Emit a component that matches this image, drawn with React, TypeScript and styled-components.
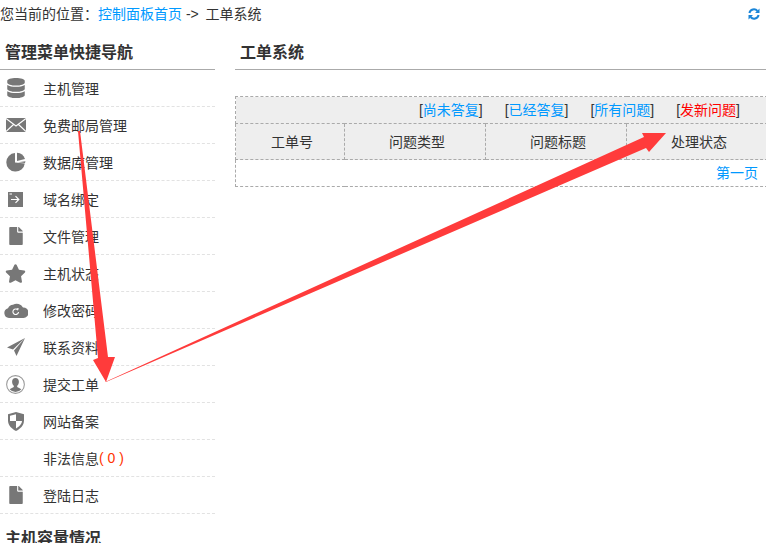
import React, { FC, ReactNode } from 'react';
import styled, { createGlobalStyle } from 'styled-components';
import { FaDatabase, FaFile, FaStar } from 'react-icons/fa';

const GlobalStyle = createGlobalStyle`
  html, body {
    margin: 0;
    padding: 0;
    height: 543px;
    overflow: hidden;
    background: #fff;
    font-family: "Liberation Sans", "Noto Sans CJK SC", sans-serif;
    font-size: 14px;
    color: #333;
  }
`;

const grey = '#777';

const MailIcon = () => (
  <svg width="20" height="14" viewBox="0 0 20 14">
    <rect width="20" height="14" fill={grey} />
    <path d="M0 .5 10 8 20 .5M0 13.5 7.5 6.5M20 13.5 12.5 6.5" fill="none" stroke="#fff" strokeWidth="1.1" />
  </svg>
);

const PieIcon = () => (
  <svg width="20" height="20" viewBox="0 0 20 20">
    <path d="M9 1A9.3 9.3 0 1 0 18.8 11.5L9 10.5Z" fill={grey} />
    <path d="M11 0.8A9 9 0 0 1 19 7L11 9Z" fill={grey} />
    <path d="M12 10.2 19.5 9.2A9 9 0 0 1 19 10.9Z" fill={grey} />
  </svg>
);

const LoginIcon = () => (
  <svg width="15" height="15" viewBox="0 0 15 15">
    <rect width="15" height="15" fill={grey} />
    <path d="M3 7.5H10M7.5 4.2 10.8 7.5 7.5 10.8M1.5 2H4" fill="none" stroke="#fff" strokeWidth="1.2" />
  </svg>
);

const CloudIcon = () => (
  <svg width="24" height="16" viewBox="0 0 24 16">
    <path d="M5 16A5 5 0 0 1 4 6.2 6 6 0 0 1 9 2.8 7 7 0 0 1 19 5.5 5.2 5.2 0 0 1 19.5 16Z" fill={grey} />
    <path d="M14.5 10A2.8 2.8 0 1 1 13.5 7.6" fill="none" stroke="#fff" strokeWidth="1.1" />
    <path d="M12.5 6 15 6.6 13.6 8.8Z" fill="#fff" />
  </svg>
);

const PlaneIcon = () => (
  <svg width="18" height="18" viewBox="0 0 18 18">
    <path d="M18 0 0 9.5 6 11.5ZM18 0 7 12.5 9.5 18Z" fill={grey} />
  </svg>
);

const UserIcon = () => (
  <svg width="19" height="19" viewBox="0 0 18 18">
    <circle cx="9" cy="9" r="8.4" fill="#fff" stroke="#999" strokeWidth="1" />
    <path d="M9 2.8C6.8 2.8 5.6 4.6 5.8 6.8 6 8.4 6.7 9.6 7.4 10.3V11.4L3.4 13.6A7.4 7.4 0 0 0 14.6 13.6L10.6 11.4V10.3C11.3 9.6 12 8.4 12.2 6.8 12.4 4.6 11.2 2.8 9 2.8Z" fill={grey} />
  </svg>
);

const ShieldIcon = () => (
  <svg width="16" height="19" viewBox="0 0 16 19">
    <path d="M8 0 16 2.2V8.5C16 13.5 12 17 8 19 4 17 0 13.5 0 8.5V2.2Z" fill={grey} />
    <path d="M8 2.2 2 3.8V9H8ZM8 9V16.4C11 14.8 13.8 12.2 14 9Z" fill="#fff" />
  </svg>
);

const RefreshIcon = () => (
  <svg width="12" height="12" viewBox="0 0 12 12">
    <path d="M1.4 5A4.6 4.6 0 0 1 9.4 3M10.6 7A4.6 4.6 0 0 1 2.6 9" fill="none" stroke="#1a85d8" strokeWidth="2" />
    <path d="M11.5 .4V5H7ZM.5 11.6V7H5Z" fill="#1a85d8" />
  </svg>
);

type MenuEntry = { icon?: ReactNode; label: string; count?: string };

const menu: MenuEntry[] = [
  { icon: <FaDatabase size={20} color={grey} />, label: '主机管理' },
  { icon: <MailIcon />, label: '免费邮局管理' },
  { icon: <PieIcon />, label: '数据库管理' },
  { icon: <LoginIcon />, label: '域名绑定' },
  { icon: <FaFile size={18} color={grey} />, label: '文件管理' },
  { icon: <FaStar size={21} color={grey} />, label: '主机状态' },
  { icon: <CloudIcon />, label: '修改密码' },
  { icon: <PlaneIcon />, label: '联系资料' },
  { icon: <UserIcon />, label: '提交工单' },
  { icon: <ShieldIcon />, label: '网站备案' },
  { label: '非法信息', count: '( 0 )' },
  { icon: <FaFile size={18} color={grey} />, label: '登陆日志' },
];

const filters = [
  { label: '尚未答复' },
  { label: '已经答复' },
  { label: '所有问题' },
  { label: '发新问题', alert: true },
];

const columns = ['工单号', '问题类型', '问题标题', '处理状态'];

const App: FC = () => (
  <>
    <GlobalStyle />
    <Page>
      <TopBar>
        <div>
          您当前的位置：<Link>控制面板首页</Link> <Crumb>-&gt;</Crumb> 工单系统
        </div>
        <RefreshIcon />
      </TopBar>
      <Columns>
        <Sidebar>
          <Heading>管理菜单快捷导航</Heading>
          {menu.map(item => (
            <MenuRow key={item.label}>
              <IconSlot>{item.icon}</IconSlot>
              {item.label}
              {item.count && <Count>{item.count}</Count>}
            </MenuRow>
          ))}
          <NextHeading>主机容量情况</NextHeading>
        </Sidebar>
        <Main>
          <Heading>工单系统</Heading>
          <Table>
            <colgroup>
              <col width="109" />
              <col width="141" />
              <col width="141" />
              <col width="141" />
            </colgroup>
            <tbody>
              <tr>
                <FilterCell colSpan={4}>
                  <Filters>
                    {filters.map(f => (
                      <span key={f.label}>
                        [<FilterLink $alert={f.alert}>{f.label}</FilterLink>]
                      </span>
                    ))}
                  </Filters>
                </FilterCell>
              </tr>
              <tr>
                {columns.map(c => (
                  <HeadCell key={c}>{c}</HeadCell>
                ))}
              </tr>
              <tr>
                <PagerCell colSpan={4}>
                  <Link>第一页</Link>
                </PagerCell>
              </tr>
            </tbody>
          </Table>
        </Main>
      </Columns>
      {/* 截图上的红色标注箭头 */}
      <Annotation width="766" height="543" viewBox="0 0 766 543">
        <path d="M78 131 80 131 108 357 115 357 106 382 93 360 98 358Z" fill="#ff3b3b" />
        <path d="M105 382 644 137 642 133 666 133 649 152 646 148 106 382Z" fill="#ff3b3b" />
      </Annotation>
    </Page>
  </>
);

export default App;

const Page = styled.div`
  position: relative;
  width: 766px;
  height: 543px;
  overflow: hidden;
`;

const TopBar = styled.div`
  display: flex;
  justify-content: space-between;
  align-items: center;
  height: 28px;
  padding-right: 6px;
  line-height: 28px;
`;

const Link = styled.span`
  color: #0099ff;
`;

const Crumb = styled.span`
  margin-right: 3px;
`;

const Columns = styled.div`
  display: flex;
  gap: 20px;
`;

const Sidebar = styled.div`
  flex: 0 0 215px;
`;

const Main = styled.div`
  flex: 1;
  min-width: 0;
`;

const Heading = styled.h2`
  margin: 0;
  height: 41px;
  padding-left: 5px;
  border-bottom: 1px solid #aaa;
  font-size: 16px;
  font-weight: 700;
  line-height: 49px;
  color: #333;
`;

const NextHeading = styled.h2`
  margin: 13px 0 0;
  padding-left: 5px;
  font-size: 16px;
  font-weight: 700;
  line-height: 24px;
  color: #333;
`;

const MenuRow = styled.div`
  display: flex;
  align-items: center;
  height: 36px;
  border-bottom: 1px dashed #e2e2e2;
`;

const IconSlot = styled.span`
  display: flex;
  justify-content: center;
  align-items: center;
  flex: 0 0 31px;
  margin-right: 12px;
`;

const Count = styled.span`
  color: #ff3300;
  white-space: pre;
`;

const Table = styled.table`
  width: 532px;
  margin-top: 26px;
  table-layout: fixed;
  border-collapse: collapse;
`;

const cellBorder = '1px dashed #aaa';

const FilterCell = styled.td`
  height: 25px;
  padding: 1px 27px 0 0;
  border: ${cellBorder};
  background: #eee;
`;

const Filters = styled.div`
  display: flex;
  justify-content: flex-end;
  gap: 22px;
  line-height: 25px;
`;

const FilterLink = styled.span<{ $alert?: boolean }>`
  color: ${p => (p.$alert ? '#ff0000' : '#0099ff')};
`;

const HeadCell = styled.td`
  height: 33px;
  padding: 0 0 2px 4px;
  border: ${cellBorder};
  background: #eee;
  text-align: center;
`;

const PagerCell = styled.td`
  height: 27px;
  padding: 0 9px 2px 0;
  box-sizing: border-box;
  border: ${cellBorder};
  text-align: right;
`;

const Annotation = styled.svg`
  position: absolute;
  top: 0;
  left: 0;
  pointer-events: none;
`;
